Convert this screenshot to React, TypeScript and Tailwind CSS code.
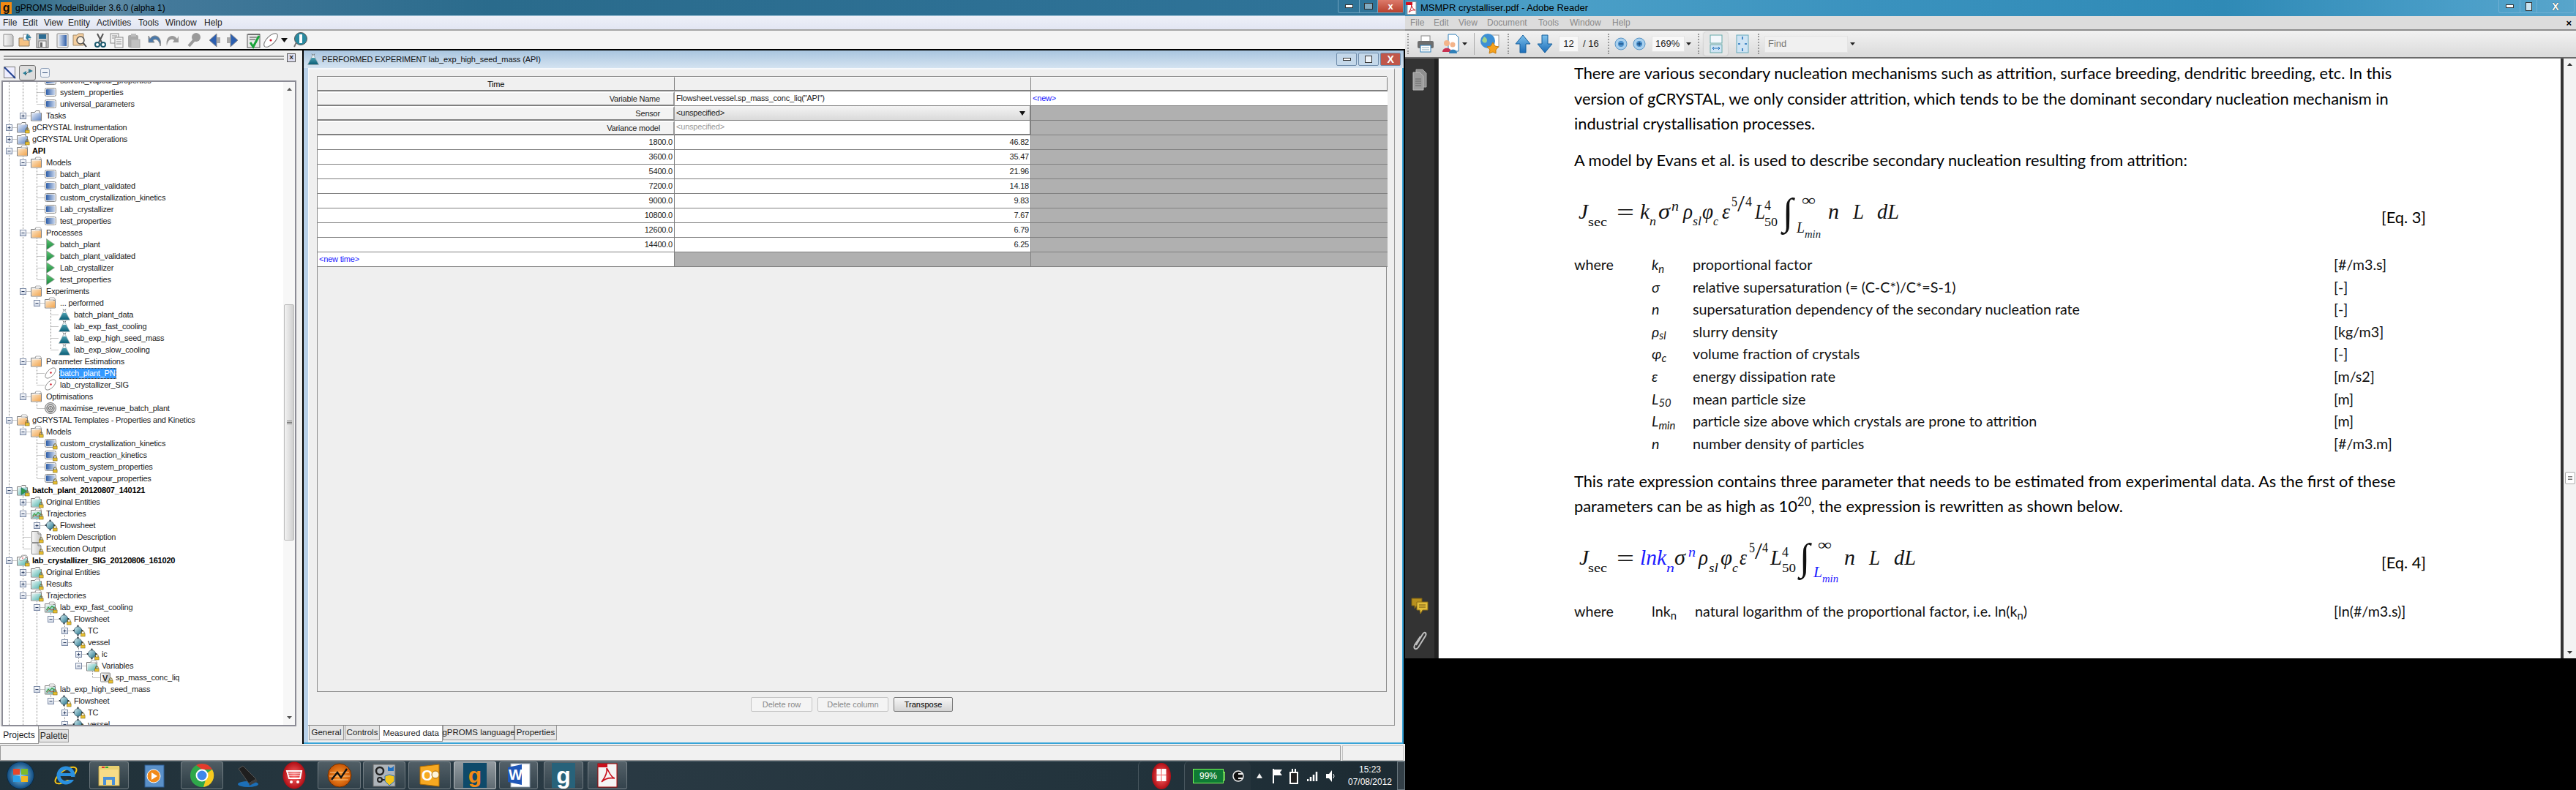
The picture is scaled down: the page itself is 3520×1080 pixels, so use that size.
import React from "react";

type Node = [number, "+" | "-" | "", string, string, ("b" | "l" | "bl")?];

const rows: Node[] = [
  [2, "", "model", "solvent_vapour_properties"],
  [2, "", "model", "system_properties"],
  [2, "", "model", "universal_parameters"],
  [1, "+", "folderC", "Tasks"],
  [0, "+", "folderC", "gCRYSTAL Instrumentation", "l"],
  [0, "+", "folderC", "gCRYSTAL Unit Operations", "l"],
  [0, "-", "folderO", "API", "b"],
  [1, "-", "folderO", "Models"],
  [2, "", "model", "batch_plant"],
  [2, "", "model", "batch_plant_validated"],
  [2, "", "model", "custom_crystallization_kinetics"],
  [2, "", "model", "Lab_crystallizer"],
  [2, "", "model", "test_properties"],
  [1, "-", "folderO", "Processes"],
  [2, "", "play", "batch_plant"],
  [2, "", "play", "batch_plant_validated"],
  [2, "", "play", "Lab_crystallizer"],
  [2, "", "play", "test_properties"],
  [1, "-", "folderO", "Experiments"],
  [2, "-", "folderO", "... performed"],
  [3, "", "flask", "batch_plant_data"],
  [3, "", "flask", "lab_exp_fast_cooling"],
  [3, "", "flask", "lab_exp_high_seed_mass"],
  [3, "", "flask", "lab_exp_slow_cooling"],
  [1, "-", "folderO", "Parameter Estimations"],
  [2, "", "pe", "batch_plant_PN"],
  [2, "", "pe", "lab_crystallizer_SIG"],
  [1, "-", "folderO", "Optimisations"],
  [2, "", "opt", "maximise_revenue_batch_plant"],
  [0, "-", "folderO", "gCRYSTAL Templates - Properties and Kinetics", "l"],
  [1, "-", "folderO", "Models", "l"],
  [2, "", "model", "custom_crystallization_kinetics", "l"],
  [2, "", "model", "custom_reaction_kinetics", "l"],
  [2, "", "model", "custom_system_properties", "l"],
  [2, "", "model", "solvent_vapour_properties", "l"],
  [0, "-", "runPlay", "batch_plant_20120807_140121", "bl"],
  [1, "+", "tealC", "Original Entities", "l"],
  [1, "-", "traj", "Trajectories", "l"],
  [2, "+", "fs", "Flowsheet", "l"],
  [1, "", "doc", "Problem Description", "l"],
  [1, "", "doc", "Execution Output", "l"],
  [0, "-", "runPe", "lab_crystallizer_SIG_20120806_161020", "bl"],
  [1, "+", "tealC", "Original Entities", "l"],
  [1, "+", "tealC", "Results", "l"],
  [1, "-", "tealO", "Trajectories", "l"],
  [2, "-", "traj", "lab_exp_fast_cooling", "l"],
  [3, "-", "fs", "Flowsheet", "l"],
  [4, "+", "fs", "TC", "l"],
  [4, "-", "fs", "vessel", "l"],
  [5, "+", "fs", "ic", "l"],
  [5, "-", "tealO", "Variables", "l"],
  [6, "", "var", "sp_mass_conc_liq", "l"],
  [2, "-", "traj", "lab_exp_high_seed_mass", "l"],
  [3, "-", "fs", "Flowsheet", "l"],
  [4, "+", "fs", "TC", "l"],
  [4, "-", "fs", "vessel", "l"],
];

const levels = rows.map((r) => r[0]).concat([2, 1, 0]);
const hasLater = (i: number, l: number) => {
  for (let j = i + 1; j < levels.length; j++) {
    if (levels[j] < l) return false;
    if (levels[j] === l) return true;
  }
  return false;
};

function Guides({ i, level, exp }: { i: number; level: number; exp: string }) {
  const w = 19 + 19 * level;
  const xOf = (l: number) => 8.5 + 19 * l;
  const els: React.ReactNode[] = [];
  for (let l = 0; l < level; l++) {
    if (hasLater(i, l))
      els.push(<line key={l} x1={xOf(l)} x2={xOf(l)} y1={0} y2={16} stroke="#8a8a8a" strokeDasharray="1 1" />);
  }
  const x = xOf(level);
  els.push(<line key="u" x1={x} x2={x} y1={0} y2={8} stroke="#8a8a8a" strokeDasharray="1 1" />);
  if (hasLater(i, level)) els.push(<line key="d" x1={x} x2={x} y1={8} y2={16} stroke="#8a8a8a" strokeDasharray="1 1" />);
  els.push(<line key="h" x1={x} x2={w} y1={8.5} y2={8.5} stroke="#8a8a8a" strokeDasharray="1 1" />);
  if (exp) {
    els.push(<rect key="b" x={x - 4} y={4.5} width={8} height={8} fill="url(#exp)" stroke="#7d8ba6" />);
    els.push(<line key="m" x1={x - 2} x2={x + 2} y1={8.5} y2={8.5} stroke="#2c3f63" />);
    if (exp === "+") els.push(<line key="p" x1={x} x2={x} y1={6.5} y2={10.5} stroke="#2c3f63" />);
  }
  return (
    <svg width={w} height={16} className="shrink-0">
      {els}
    </svg>
  );
}

const Lock = () => (
  <g>
    <path d="M12.5 12 v-1.5 a1.8 1.8 0 0 1 3.6 0 V12" fill="none" stroke="#6b5a10" strokeWidth="0.9" />
    <rect x="11.5" y="12" width="5.6" height="4" fill="#e9c030" stroke="#6b5a10" strokeWidth="0.5" />
  </g>
);

function Folder({ fill, open }: { fill: string; open?: boolean }) {
  return (
    <>
      <path d="M0.5 3.5 h5 l1.5 -2 h5 v3 h2.5 v10.5 h-14 z" fill="#f7f7f7" stroke="#7c7c7c" />
      {open && <path d="M6 4 l1 -3 h6 l2 3 z" fill="#fff" stroke="#8a8a8a" strokeWidth="0.7" />}
      <rect x="1.5" y={open ? 5.5 : 4.5} width="12.5" height={open ? 9 : 10} fill={`url(#${fill})`} />
    </>
  );
}

function Globe() {
  return (
    <>
      <path d="M7.5 1.5 L14 8 L7.5 14.5 L1 8 Z" fill="#3a5a70" />
      <circle cx="7.5" cy="8" r="5.2" fill="url(#globe)" stroke="#2b4453" strokeWidth="0.6" />
      <circle cx="7.5" cy="1.5" r="1.1" fill="#1d2b35" />
      <circle cx="7.5" cy="14.5" r="1.1" fill="#1d2b35" />
      <circle cx="1.5" cy="8" r="1.1" fill="#1d2b35" />
      <circle cx="13.5" cy="8" r="1.1" fill="#1d2b35" />
    </>
  );
}

function Ic({ t, lock }: { t: string; lock?: boolean }) {
  let c: React.ReactNode = null;
  if (t === "model")
    c = (
      <>
        <rect x="0.5" y="2.5" width="15" height="11" rx="2" fill="#eee" stroke="#8c8c8c" />
        <rect x="2" y="4" width="12" height="8" rx="1" fill="url(#model)" />
      </>
    );
  if (t === "folderO") c = <Folder fill="orangeF" open />;
  if (t === "folderC") c = <Folder fill="blueF" />;
  if (t === "tealC") c = <Folder fill="tealF" />;
  if (t === "tealO") c = <Folder fill="tealF" open />;
  if (t === "play")
    c = <path d="M2.5 0.5 L13.5 8 L2.5 15.5 Z" fill="url(#play)" stroke="#9a9a9a" strokeWidth="0.7" />;
  if (t === "flask")
    c = (
      <>
        <path d="M6 0.5 L8 4 L10 0.5" fill="none" stroke="#777" />
        <path d="M8 1 L15.5 15.5 H0.5 Z" fill="#e8f2f4" stroke="#7a8a90" strokeWidth="0.6" />
        <path d="M5.7 6 H10.3 L15 15 H1 Z" fill="url(#flask)" />
      </>
    );
  if (t === "pe")
    c = (
      <>
        <ellipse cx="8" cy="8" rx="9" ry="4.5" transform="rotate(-45 8 8)" fill="#fff" stroke="#777" strokeWidth="0.8" />
        <circle cx="8.5" cy="7.5" r="1.2" fill="#d11a2a" />
      </>
    );
  if (t === "opt")
    c = (
      <>
        <circle cx="8" cy="8" r="7.5" fill="#d8d8d8" stroke="#777" />
        <circle cx="8" cy="8" r="5" fill="none" stroke="#555" />
        <circle cx="8" cy="8" r="2.6" fill="none" stroke="#666" />
        <circle cx="8" cy="8" r="0.8" fill="#444" />
      </>
    );
  if (t === "doc")
    c = (
      <>
        <path d="M1.5 0.5 H10 L14 4 V15.5 H1.5 Z" fill="url(#docG)" stroke="#8d8d8d" />
        <path d="M10 0.5 V4 H14" fill="#ddd" stroke="#8d8d8d" />
      </>
    );
  if (t === "fs") c = <Globe />;
  if (t === "var")
    c = (
      <>
        <rect x="0.5" y="2" width="13" height="12" rx="1" fill="url(#docG)" stroke="#8c8c8c" />
        <text x="3" y="12.5" fontSize="11" fontWeight="700" fill="#222" fontFamily="Liberation Sans, sans-serif">
          V
        </text>
      </>
    );
  if (t === "traj")
    c = (
      <>
        <Folder fill="tealF" open />
        <path d="M2.5 12 L5 8 L7 10.5 L10 6.5 L13 9" fill="none" stroke="#3a9a3a" strokeWidth="1.2" />
        <path d="M2.5 13.5 L6 10.5 L9 12 L13 10.5" fill="none" stroke="#c83232" strokeWidth="0.8" />
      </>
    );
  if (t === "runPlay")
    c = (
      <>
        <Folder fill="tealF" />
        <path d="M6 4.5 L13.5 9.5 L6 14.5 Z" fill="#2f9a4a" stroke="#1e5c70" strokeWidth="0.6" />
      </>
    );
  if (t === "runPe")
    c = (
      <>
        <Folder fill="tealF" open />
        <ellipse cx="8" cy="5" rx="5" ry="2.4" transform="rotate(-30 8 5)" fill="#fff" stroke="#777" strokeWidth="0.6" />
        <circle cx="8" cy="5" r="0.8" fill="#d11a2a" />
      </>
    );
  return (
    <svg width={17} height={16} viewBox="0 0 17 16" className="shrink-0 overflow-visible">
      {c}
      {lock && <Lock />}
    </svg>
  );
}

function Tree() {
  return (
    <div className="-mt-[10px]">
      {rows.map((r, i) => {
        const [lv, exp, ic, label, f] = r;
        const bold = f === "b" || f === "bl";
        const lock = f === "l" || f === "bl";
        const sel = label === "batch_plant_PN";
        return (
          <div key={i} className="flex h-4 items-center whitespace-nowrap">
            <Guides i={i} level={lv} exp={exp} />
            <Ic t={ic} lock={lock} />
            {sel ? (
              <span className="ml-[3px] flex h-[15px] items-center border border-dotted border-[#5a3a10] bg-[#3399ff] pr-[1px] leading-none text-white">
                {label}
              </span>
            ) : (
              <span className={`ml-[4px] ${bold ? "font-bold text-black" : ""}`}>{label}</span>
            )}
          </div>
        );
      })}
    </div>
  );
}

/* ---------- toolbar drawings ---------- */
const T = ({ children, w = 24, h = 24 }: { children: React.ReactNode; w?: number; h?: number }) => (
  <svg width={w} height={h} viewBox={`0 0 ${w} ${h}`} className="shrink-0">
    {children}
  </svg>
);

const tb: Record<string, React.ReactNode> = {
  newDoc: <path d="M5 4 H16 L18 6 V20 H5 Z" fill="url(#docG)" stroke="#8a8a8a" />,
  open: (
    <>
      <path d="M3 9 H8 L10 7 H17 V20 H3 Z" fill="#f5c283" stroke="#8a7a60" />
      <path d="M9 4 H16 L18 6 V12 H9 Z" fill="#fff" stroke="#999" />
      <path d="M14 3 L20 9 L16 9 L16 13 L12 9 Z" fill="#2f7fa0" />
    </>
  ),
  save: (
    <>
      <rect x="4" y="3" width="16" height="19" fill="#c9c9c9" stroke="#666" />
      <rect x="7" y="4" width="10" height="6" fill="#2b6c93" />
      <rect x="7" y="13" width="10" height="9" fill="#f4f4f4" stroke="#777" />
      <rect x="9" y="15" width="3" height="6" fill="#666" />
    </>
  ),
  model: (
    <>
      <rect x="4" y="3" width="15" height="19" rx="1" fill="#eee" stroke="#8b8b8b" />
      <rect x="6" y="5" width="11" height="15" fill="url(#model2)" />
    </>
  ),
  search: (
    <>
      <path d="M3 5 H8 L10 3 H17 V19 H3 Z" fill="#f5cf9f" stroke="#a08a6a" />
      <circle cx="13" cy="12" r="5" fill="#fff" fillOpacity=".7" stroke="#555" strokeWidth="1.5" />
      <path d="M17 16 L21 21" stroke="#444" strokeWidth="2" />
    </>
  ),
  cut: (
    <>
      <path d="M8 3 L14 15 M16 3 L10 15" stroke="#555" strokeWidth="2" />
      <circle cx="8" cy="18" r="3" fill="#fff" stroke="#1d5a6e" strokeWidth="2" />
      <circle cx="16" cy="18" r="3" fill="#fff" stroke="#1d5a6e" strokeWidth="2" />
    </>
  ),
  copy: (
    <>
      <rect x="3" y="3" width="11" height="13" fill="#f5f5f5" stroke="#888" />
      <rect x="9" y="8" width="11" height="14" fill="#f5f5f5" stroke="#888" />
      <path d="M11 11 H18 M11 14 H18 M11 17 H18" stroke="#888" />
      <path d="M5 6 H12 M5 9 H8" stroke="#888" />
    </>
  ),
  paste: (
    <>
      <rect x="4" y="5" width="14" height="17" rx="2" fill="#a8a8a8" />
      <rect x="8" y="3" width="7" height="4" fill="#bcbcbc" />
      <rect x="8" y="11" width="12" height="11" fill="#c2c2c2" stroke="#aaa" />
    </>
  ),
  undo: <path d="M5 10 C10 2 22 6 19 20 C18 12 13 9 9 12 L11 15 L3 15 L3 6 Z" fill="#4a78a8" stroke="#8d8d8d" />,
  redo: <path d="M19 10 C14 2 2 6 5 20 C6 12 11 9 15 12 L13 15 L21 15 L21 6 Z" fill="#9a9a9a" />,
  find: (
    <>
      <circle cx="15" cy="8" r="6" fill="#9a9a9a" />
      <path d="M12 12 L5 20" stroke="#9a9a9a" strokeWidth="4" />
    </>
  ),
  left: (
    <>
      <path d="M4 12 L14 3 V21 Z" fill="#2c5fb0" stroke="#8d8d8d" />
      <rect x="14" y="8" width="5" height="8" fill="#a8a8a8" />
    </>
  ),
  right: (
    <>
      <path d="M20 12 L10 3 V21 Z" fill="#2c5fb0" stroke="#8d8d8d" />
      <rect x="5" y="8" width="5" height="8" fill="#a8a8a8" />
    </>
  ),
  check: (
    <>
      <rect x="3" y="4" width="17" height="18" fill="#e8e8e8" stroke="#555" />
      <path d="M4 4 H20 M6 8 H17 M6 11 H14" stroke="#444" />
      <path d="M7 15 L11 21 L19 6" fill="none" stroke="#1aa33a" strokeWidth="3" />
    </>
  ),
  pe: (
    <>
      <ellipse cx="12" cy="12" rx="12" ry="5.5" transform="rotate(-45 12 12)" fill="#fff" stroke="#777" />
      <circle cx="12" cy="12" r="1.6" fill="#d11a2a" />
    </>
  ),
  info: (
    <>
      <circle cx="13" cy="10" r="8.5" fill="#2a8aa0" stroke="#555" />
      <rect x="11" y="4" width="4" height="12" fill="#fff" />
      <path d="M7 15 L4 21" stroke="#777" strokeWidth="2" />
    </>
  ),
};

const leftTools: [string, number][] = [
  ["newDoc", 0], ["open", 0], ["save", 5], ["model", 0], ["search", 5], ["cut", 0], ["copy", 0], ["paste", 6],
  ["undo", 0], ["redo", 7], ["find", 6], ["left", 0], ["right", 7], ["check", 0], ["pe", 0],
];

function Tb({ n, after }: { n: string; after: number }) {
  return (
    <div className="flex h-full w-[23px] shrink-0 items-center justify-center" style={after ? { marginRight: after } : undefined}>
      <T>{tb[n]}</T>
    </div>
  );
}

const Defs = () => (
  <svg className="absolute h-0 w-0">
    <defs>
      <linearGradient id="exp" x1="0" y1="0" x2="0" y2="1"><stop offset="0" stopColor="#fff" /><stop offset="1" stopColor="#cdd5e4" /></linearGradient>
      <linearGradient id="model" x1="0" y1="0" x2="1" y2="0"><stop offset="0" stopColor="#2e5ea8" /><stop offset="1" stopColor="#c9d6ec" /></linearGradient>
      <linearGradient id="model2" x1="0" y1="0" x2="1" y2="0"><stop offset="0" stopColor="#dfe6f2" /><stop offset="1" stopColor="#2e5ea8" /></linearGradient>
      <linearGradient id="orangeF" x1="0" y1="0" x2="1" y2="1"><stop offset="0" stopColor="#fbe3c4" /><stop offset="1" stopColor="#f2a54e" /></linearGradient>
      <linearGradient id="blueF" x1="0" y1="0" x2="1" y2="1"><stop offset="0" stopColor="#e6ecf7" /><stop offset="1" stopColor="#5d84c4" /></linearGradient>
      <linearGradient id="tealF" x1="0" y1="0" x2="1" y2="1"><stop offset="0" stopColor="#e8f5f4" /><stop offset="1" stopColor="#4fb4ae" /></linearGradient>
      <linearGradient id="play" x1="0" y1="0" x2="0" y2="1"><stop offset="0" stopColor="#63c978" /><stop offset="1" stopColor="#16853a" /></linearGradient>
      <linearGradient id="flask" x1="0" y1="0" x2="0" y2="1"><stop offset="0" stopColor="#4c9fb0" /><stop offset="1" stopColor="#0b5f78" /></linearGradient>
      <linearGradient id="globe" x1="0" y1="0" x2="1" y2="1"><stop offset="0" stopColor="#d4eef2" /><stop offset="1" stopColor="#22718a" /></linearGradient>
      <linearGradient id="docG" x1="0" y1="0" x2="1" y2="0"><stop offset="0" stopColor="#fafafa" /><stop offset="1" stopColor="#c4c4c4" /></linearGradient>
      <linearGradient id="arrowB" x1="0" y1="0" x2="0" y2="1"><stop offset="0" stopColor="#7cc0ec" /><stop offset="1" stopColor="#1b6cb8" /></linearGradient>
      <radialGradient id="orb"><stop offset="0" stopColor="#8fd0f0" /><stop offset="1" stopColor="#0f4a80" /></radialGradient>
      <radialGradient id="redB"><stop offset="0" stopColor="#ff6a6a" /><stop offset="1" stopColor="#b00d14" /></radialGradient>
      <radialGradient id="orangeB"><stop offset="0" stopColor="#ff9a2e" /><stop offset="1" stopColor="#c85505" /></radialGradient>
    </defs>
  </svg>
);

/* ---------- table ---------- */
const headBase = "h-5 bg-[#f0f0f0] border-b-2 border-r border-[#808080] border-t border-t-white text-center leading-[18px] text-black";
const labelCell = "h-5 bg-[#f3f3f3] border-t-2 border-t-white border-b-2 border-b-[#808080] border-r-2 border-r-[#9a9a9a] pr-[18px] text-right leading-[16px]";
const dataRows = [
  ["1800.0", "46.82"], ["3600.0", "35.47"], ["5400.0", "21.96"], ["7200.0", "14.18"],
  ["9000.0", "9.83"], ["10800.0", "7.67"], ["12600.0", "6.79"], ["14400.0", "6.25"],
];
const numCell = "h-5 bg-white border-b border-r border-[#808080] pr-[2px] text-right leading-[19px]";
const greyCell = "h-5 bg-[#b0b0b0] border-b border-[#808080]";

function Table() {
  return (
    <div className="grid grid-cols-[488px_487px_487px]">
      <div className={headBase}>Time</div>
      <div className={headBase} />
      <div className={headBase} />

      <div className={labelCell}>Variable Name</div>
      <div className="h-5 truncate border-b border-r border-[#808080] bg-white pl-[2px] leading-[19px]">Flowsheet.vessel.sp_mass_conc_liq("API")</div>
      <div className="h-5 border-b border-[#808080] bg-white pl-[2px] leading-[19px] text-[#1a1aff]">&lt;new&gt;</div>

      <div className={labelCell}>Sensor</div>
      <div className="flex h-5 items-center justify-between border-b border-r-2 border-[#808080] bg-[linear-gradient(180deg,#f4f4f4,#dadada)] pl-[2px] pr-[6px]">
        <span>&lt;unspecified&gt;</span>
        <svg width="8" height="6"><path d="M0 0 H8 L4 6 Z" fill="#111" /></svg>
      </div>
      <div className={greyCell} />

      <div className={labelCell}>Variance model</div>
      <div className="h-5 border-b-2 border-r-2 border-[#808080] bg-white pl-[2px] leading-[17px] text-[#999]">&lt;unspecified&gt;</div>
      <div className={greyCell} />

      {dataRows.map(([a, b]) => (
        <React.Fragment key={a}>
          <div className={numCell}>{a}</div>
          <div className={numCell}>{b}</div>
          <div className={greyCell} />
        </React.Fragment>
      ))}

      <div className="h-5 border-b border-r border-[#808080] bg-white pl-[2px] leading-[19px] text-[#1a1aff]">&lt;new time&gt;</div>
      <div className="h-5 border-b border-r border-[#808080] bg-[#b0b0b0]" />
      <div className={greyCell} />
    </div>
  );
}

/* ---------- window buttons ---------- */
const WinBtn = ({ children, cls }: { children: React.ReactNode; cls: string }) => (
  <div className={`flex h-[18px] w-[28px] items-center justify-center rounded-[2px] border border-[#6f8cab] ${cls}`}>{children}</div>
);

/* ---------- taskbar ---------- */
const task: { w: string; btn?: string; n: React.ReactNode }[] = [
  {
    w: "w-[56px] ml-0",
    n: (
      <T w={40} h={40}>
        <circle cx="20" cy="20" r="18.5" fill="url(#orb)" stroke="#0b2c44" />
        <rect x="10" y="11" width="9" height="8" fill="#e8472a" />
        <rect x="21" y="11" width="9" height="8" fill="#7cbb2a" />
        <rect x="10" y="21" width="9" height="8" fill="#2a9fe8" />
        <rect x="21" y="21" width="9" height="8" fill="#f5b81e" />
      </T>
    ),
  },
  {
    w: "w-[62px] ml-[3px]",
    n: (
      <T w={36} h={36}>
        <ellipse cx="18" cy="18" rx="17" ry="7" transform="rotate(-35 18 18)" fill="none" stroke="#f5c518" strokeWidth="2" />
        <circle cx="18" cy="18" r="10" fill="none" stroke="#2a90e0" strokeWidth="5" />
        <rect x="8" y="15" width="20" height="4" fill="#2a90e0" />
        <rect x="20" y="20" width="10" height="4" fill="#1d2b35" />
      </T>
    ),
  },
  {
    w: "w-[54px] ml-[1px]",
    btn: "b",
    n: (
      <T w={34} h={34}>
        <rect x="3" y="6" width="28" height="25" fill="#f7dc88" stroke="#b89c40" />
        <rect x="3" y="4" width="28" height="5" fill="#e8d070" />
        <rect x="7" y="5" width="4" height="2" fill="#d33" />
        <rect x="12" y="5" width="4" height="2" fill="#3a3" />
        <path d="M9 30 V19 H25 V30 H21 V23 H13 V30 Z" fill="#4a90d8" />
      </T>
    ),
  },
  {
    w: "w-[70px] ml-[1px]",
    n: (
      <T w={30} h={34}>
        <rect x="1" y="3" width="26" height="30" fill="#5a90c8" stroke="#2b5a90" />
        <circle cx="13" cy="18" r="9" fill="#f18a1a" stroke="#fff" />
        <path d="M10 13 L18 18 L10 23 Z" fill="#fff" />
      </T>
    ),
  },
  {
    w: "w-[58px]",
    btn: "b",
    n: (
      <T w={34} h={34}>
        <circle cx="17" cy="17" r="16" fill="#2fa84a" />
        <path d="M17 1 A16 16 0 0 1 31 9 L17 9 L9 3 A16 16 0 0 1 17 1 Z" fill="#e33a2c" />
        <path d="M31 9 A16 16 0 0 1 19 33 L25 13 Z" fill="#f7c91e" />
        <circle cx="17" cy="17" r="7.5" fill="#3f86e8" stroke="#fff" strokeWidth="2" />
      </T>
    ),
  },
  {
    w: "w-[65px] ml-[1px]",
    n: (
      <T w={34} h={34}>
        <ellipse cx="17" cy="29" rx="14" ry="4" fill="#1c6fb8" />
        <path d="M4 8 L10 4 L28 22 L18 28 Z" fill="#1f1f1f" stroke="#555" />
        <path d="M18 28 L28 22 L30 25 L19 31 Z" fill="#3d3d3d" />
      </T>
    ),
  },
  {
    w: "w-[62px]",
    n: (
      <T w={34} h={38}>
        <ellipse cx="17" cy="19" rx="15.5" ry="18.5" fill="url(#redB)" />
        <path d="M7 13 H27 L25 23 H10 Z" fill="none" stroke="#fff" strokeWidth="2" />
        <path d="M9 16 H26 M10 19 H25" stroke="#fff" />
        <circle cx="13" cy="28" r="2" fill="#fff" />
        <circle cx="22" cy="28" r="2" fill="#fff" />
      </T>
    ),
  },
  {
    w: "w-[59px] ml-[1px]",
    btn: "b",
    n: (
      <T w={34} h={36}>
        <circle cx="17" cy="18" r="16" fill="url(#orangeB)" stroke="#6b2f00" />
        <path d="M4 14 H30 M3 19 H31 M5 24 H29" stroke="#ffd9a8" strokeWidth="0.8" />
        <path d="M6 24 L14 14 L19 21 L27 9" fill="none" stroke="#111" strokeWidth="2.4" />
      </T>
    ),
  },
  {
    w: "w-[58px] ml-[3px]",
    btn: "b",
    n: (
      <T w={34} h={36}>
        <rect x="2" y="3" width="30" height="30" fill="#aeb4b9" stroke="#666" />
        <circle cx="11" cy="12" r="5" fill="none" stroke="#222" strokeWidth="2.5" />
        <circle cx="11" cy="24" r="3" fill="none" stroke="#222" strokeWidth="2" />
        <path d="M14 24 H22" stroke="#222" strokeWidth="2" />
        <path d="M22 5 q4 6 8 0 v7 h-8 z" fill="#1f6fc0" />
        <path d="M24 17 L31 19 V26 L24 32 L18 26 V19 Z" fill="#f5c518" stroke="#2a6fb8" />
      </T>
    ),
  },
  {
    w: "w-[58px] ml-[4px]",
    btn: "b",
    n: (
      <T w={34} h={36}>
        <path d="M4 6 L30 3 V33 L4 30 Z" fill="#f6a821" stroke="#b06a00" />
        <text x="6" y="25" fontSize="20" fontWeight="700" fill="#fff" fontFamily="Liberation Sans, sans-serif">O</text>
        <circle cx="25" cy="17" r="5" fill="#fff6da" stroke="#b06a00" />
      </T>
    ),
  },
  {
    w: "w-[58px] ml-[4px]",
    btn: "a",
    n: (
      <div className="flex h-[34px] w-[32px] items-center justify-center bg-[#0e4a6a] font-['Liberation_Sans',sans-serif] text-[30px] font-bold leading-none text-[#f28a16]">g</div>
    ),
  },
  {
    w: "w-[53px] ml-[4px]",
    btn: "b",
    n: (
      <T w={34} h={36}>
        <rect x="6" y="2" width="26" height="32" fill="#fff" stroke="#9ab" />
        <path d="M2 7 L21 3 V31 L2 27 Z" fill="#1f57b8" />
        <text x="3" y="24" fontSize="20" fontWeight="700" fill="#fff" fontFamily="Liberation Sans, sans-serif">W</text>
      </T>
    ),
  },
  {
    w: "w-[54px] ml-[8px]",
    btn: "b",
    n: (
      <div className="flex h-[34px] w-[32px] items-center justify-center bg-[#27627a] font-['Liberation_Sans',sans-serif] text-[32px] font-bold leading-none text-white">g</div>
    ),
  },
  {
    w: "w-[54px] ml-[6px]",
    btn: "b",
    n: (
      <T w={32} h={36}>
        <rect x="3" y="2" width="26" height="32" fill="#f4f4f4" stroke="#a00" />
        <rect x="3" y="2" width="13" height="5" fill="#c8101c" />
        <path d="M8 27 C14 20 16 12 15 8 C19 14 20 20 26 22 C20 21 13 22 8 27 Z" fill="none" stroke="#c8101c" strokeWidth="1.6" />
      </T>
    ),
  },
];

function Taskbar() {
  return (
    <div className="flex h-10 border-t border-[#5e6d75] bg-[linear-gradient(90deg,#1f3038,#2a3a44_40%,#22333c_80%,#1c2a32)] tracking-normal">
      <div className="flex">
        {task.map((it, i) => (
          <div
            key={i}
            className={`flex h-[38px] shrink-0 items-center justify-center rounded-[3px] ${it.w} ${
              it.btn === "b"
                ? "border border-white/25 bg-[linear-gradient(180deg,rgba(255,255,255,.2),rgba(255,255,255,.05))]"
                : it.btn === "a"
                ? "border border-white/50 bg-[linear-gradient(180deg,rgba(255,255,255,.5),rgba(255,255,255,.25))]"
                : ""
            }`}
          >
            {it.n}
          </div>
        ))}
      </div>
      <div className="ml-auto flex h-full items-center text-white">
        <div className="flex h-full w-[63px] items-center justify-center rounded-t-[6px] border-l border-[#4a5860]">
          <T w={28} h={38}>
            <ellipse cx="14" cy="19" rx="13" ry="18" fill="url(#redB)" />
            <rect x="7.5" y="9" width="6" height="8" fill="#fff" />
            <rect x="14.5" y="9" width="6" height="8" fill="#fff" />
            <rect x="7.5" y="18" width="6" height="8" fill="#fff" />
            <rect x="14.5" y="18" width="6" height="8" fill="#fff" />
          </T>
        </div>
        <div className="flex h-full w-[91px] items-center rounded-t-[6px] border-l border-[#4a5860] bg-[#26343c] pl-[11px]">
          <div className="flex h-[20px] w-[42px] items-center justify-center border border-[#7dff5a] bg-[#0f7a34] text-[12px] leading-none">99%</div>
          <div className="h-[12px] w-[2px] border-y border-r border-[#7dff5a]" />
          <svg width="18" height="18" className="ml-[9px]">
            <circle cx="9" cy="9" r="7" fill="#111" stroke="#eee" strokeWidth="1.5" />
            <rect x="9" y="5" width="7" height="2" fill="#eee" />
            <rect x="9" y="11" width="7" height="2" fill="#eee" />
          </svg>
        </div>
        <svg width="8" height="7" className="ml-[8px]"><path d="M0 7 L4 0 L8 7 Z" fill="#eee" /></svg>
        <svg width="16" height="22" className="ml-[13px]"><path d="M2 1 V21" stroke="#fff" strokeWidth="2" /><path d="M3 2 H14 L11 6 L14 10 H3 Z" fill="#fff" /></svg>
        <svg width="14" height="22" className="ml-[7px]"><rect x="2" y="6" width="10" height="15" fill="#222" stroke="#fff" strokeWidth="2" /><path d="M5 1 V6 M9 1 V6" stroke="#fff" strokeWidth="2" /></svg>
        <svg width="16" height="16" className="ml-[11px]"><path d="M1 15 V12 M5 15 V9 M9 15 V6 M13 15 V2" stroke="#fff" strokeWidth="2.5" /></svg>
        <svg width="14" height="20" className="ml-[9px]"><path d="M1 7 H5 L9 2 V18 L5 13 H1 Z" fill="#fff" /><path d="M11 7 Q13 10 11 13" fill="none" stroke="#fff" /></svg>
        <div className="ml-[12px] flex w-[70px] flex-col items-center text-[12px] leading-[17px]">
          <span>15:23</span>
          <span>07/08/2012</span>
        </div>
        <div className="ml-[2px] h-full w-[11px] border border-[#6a777e] bg-white/10" />
      </div>
    </div>
  );
}

/* ---------- PDF ---------- */
const Grip = ({ cls }: { cls: string }) => <div className={`h-[28px] w-[3px] shrink-0 border-l-2 border-dotted border-[#9a9a9a] ${cls}`} />;
const Drop = ({ cls = "w-[10px]" }: { cls?: string }) => (
  <div className={`flex shrink-0 justify-center ${cls}`}>
    <svg width="7" height="4"><path d="M0 0 H7 L3.5 4 Z" fill="#222" /></svg>
  </div>
);

const Ln = ({ children, cls = "" }: { children: React.ReactNode; cls?: string }) => (
  <div className={`h-[34.5px] whitespace-nowrap text-[21.8px] leading-[34.5px] text-black ${cls}`}>{children}</div>
);

const W = ({ children, cls = "" }: { children: React.ReactNode; cls?: string }) => (
  <div className={`h-[30.6px] whitespace-nowrap text-[19.7px] leading-[30.6px] text-[#111] ${cls}`}>{children}</div>
);

const whereRows: [React.ReactNode, string, string][] = [
  [<>k<sub>n</sub></>, "proportional factor", "[#/m3.s]"],
  ["σ", "relative supersaturation (= (C-C*)/C*=S-1)", "[-]"],
  ["n", "supersaturation dependency of the secondary nucleation rate", "[-]"],
  [<>ρ<sub>sl</sub></>, "slurry density", "[kg/m3]"],
  [<>φ<sub>c</sub></>, "volume fraction of crystals", "[-]"],
  ["ε", "energy dissipation rate", "[m/s2]"],
  [<>L<sub>50</sub></>, "mean particle size", "[m]"],
  [<>L<sub>min</sub></>, "particle size above which crystals are prone to attrition", "[m]"],
  ["n", "number density of particles", "[#/m3.m]"],
];

type FT = [number, number, string, number, number?, boolean?, boolean?];
function Formula({ items, vb, w, h }: { items: FT[]; vb: string; w: number; h: number }) {
  return (
    <svg width={w} height={h} viewBox={vb} className="shrink-0 overflow-visible">
      {items.map(([x, y, s, size, len, upright, blue], i) => (
        <text
          key={i}
          x={x}
          y={y}
          fontSize={size}
          fontFamily="'Liberation Serif', serif"
          fontStyle={upright ? "normal" : "italic"}
          fill={blue ? "#1a1aff" : "#111"}
          {...(len ? { textLength: len, lengthAdjust: "spacingAndGlyphs" as const } : {})}
        >
          {s}
        </text>
      ))}
    </svg>
  );
}

const f1: FT[] = [
  [2157, 299, "J", 29, 13], [2170, 309, "sec", 17, 26, true], [2209, 301, "=", 32, 24, true],
  [2241, 299, "k", 29, 13], [2254, 308, "n", 17, 9], [2266, 299, "σ", 29, 16], [2284, 288, "n", 18, 10],
  [2300, 299, "ρ", 29, 13], [2313, 308, "sl", 17, 12], [2326, 299, "φ", 29, 15], [2341, 308, "c", 17, 7],
  [2353, 299, "ε", 29, 11], [2366, 282, "5", 18, 8, true], [2374, 289, "/", 32, 10, true], [2385, 282, "4", 18, 9, true],
  [2398, 299, "L", 29, 14], [2411, 287, "4", 18, 9, true], [2411, 309, "50", 17, 18, true],
  [2436, 307, "∫", 52, undefined, true], [2462, 281, "∞", 22, 19, true], [2455, 318, "L", 22, 11], [2466, 325, "min", 15, 22],
  [2498, 299, "n", 29, 15], [2532, 299, "L", 29, 15], [2565, 299, "dL", 29, 30],
];
const f2: FT[] = [
  [2158, 772, "J", 29, 13], [2170, 782, "sec", 17, 26, true], [2209, 774, "=", 32, 24, true],
  [2241, 772, "lnk", 29, 36, false, true], [2277, 782, "n", 17, 11, false, true], [2288, 772, "σ", 29, 15],
  [2307, 761, "n", 18, 10, false, true], [2321, 772, "ρ", 29, 13], [2335, 782, "sl", 17, 13], [2351, 772, "φ", 29, 16], [2367, 782, "c", 17, 8],
  [2377, 772, "ε", 29, 10], [2390, 755, "5", 18, 8, true], [2398, 764, "/", 32, 10, true], [2408, 755, "4", 18, 8, true],
  [2419, 772, "L", 29, 16], [2435, 761, "4", 18, 9, true], [2435, 782, "50", 17, 19, true],
  [2459, 779, "∫", 52, undefined, true], [2484, 752, "∞", 22, 19, true], [2478, 789, "L", 22, 12, false, true], [2490, 796, "min", 15, 22, false, true],
  [2520, 772, "n", 29, 15], [2554, 772, "L", 29, 15], [2588, 772, "dL", 29, 30],
];

function PdfTool({ children, cls }: { children: React.ReactNode; cls: string }) {
  return <div className={`flex shrink-0 items-center justify-center ${cls}`}>{children}</div>;
}

function Pdf() {
  return (
    <div className="flex h-[900px] w-[1600px] shrink-0 flex-col font-['Lato',sans-serif] tracking-normal">
      <div className="flex h-[22px] shrink-0 items-center bg-[linear-gradient(90deg,#3f8fba,#4ca0c8_12%,#3a92be_40%,#2f8ab6_70%,#4a9ec8_90%,#58a5cb)]">
        <svg width="16" height="18" className="ml-[1px]">
          <rect x="2" y="0.5" width="12" height="17" fill="#fff" stroke="#999" />
          <rect x="0" y="1" width="9" height="4" fill="#d01020" />
          <path d="M4 15 C7 11 8 7 7.5 5 C9 8 10 11 13 12 C10 11.5 7 12 4 15 Z" fill="none" stroke="#c8101c" />
        </svg>
        <span className="ml-[4px] font-['Liberation_Sans',sans-serif] text-[13px] text-black">MSMPR crystalliser.pdf - Adobe Reader</span>
        <div className="ml-auto mr-[2px] flex h-[18px] w-[104px] self-start rounded-b-[3px] border-x border-b border-[#70b0d4]">
          <div className="flex w-[28px] items-center justify-center"><div className="h-[5px] w-[11px] border border-[#333] bg-white" /></div>
          <div className="flex w-[24px] items-center justify-center border-x border-[#70b0d4]"><div className="h-[12px] w-[9px] border border-[#333] bg-white/70" /></div>
          <div className="flex flex-1 items-center justify-center font-['Liberation_Sans',sans-serif] text-[14px] font-bold leading-none text-white [text-shadow:0_0_1px_#000]">X</div>
        </div>
      </div>
      <div className="flex h-5 shrink-0 items-center border-b-2 border-[#8c8c8c] bg-[#dcdcdc] font-['Liberation_Sans',sans-serif] text-[12px] text-[#8a8a8a]">
        {[["File", "w-[32px] ml-[7px]"], ["Edit", "w-[34px]"], ["View", "w-[39px]"], ["Document", "w-[70px]"], ["Tools", "w-[43px]"], ["Window", "w-[58px]"], ["Help", "w-[40px]"]].map(([t, c]) => (
          <span key={t} className={c}>{t}</span>
        ))}
        <span className="ml-auto mr-[6px] text-[13px] font-bold leading-none text-black">×</span>
      </div>
      <div className="flex h-[38px] shrink-0 items-center border-b-2 border-[#6a6a6a] bg-[linear-gradient(180deg,#f2f2f2,#dadada)] font-['Liberation_Sans',sans-serif] text-[13px] text-[#222]">
        <Grip cls="ml-[3px]" />
        <PdfTool cls="ml-[8px] w-[28px]">
          <T w={24} h={24}>
            <rect x="6" y="1" width="12" height="8" fill="#fff" stroke="#888" />
            <rect x="1" y="8" width="22" height="10" rx="2" fill="#6e6e6e" />
            <rect x="5" y="14" width="14" height="9" fill="#fff" stroke="#2f7fb8" />
            <path d="M7 17 H17 M7 20 H17" stroke="#8ab" />
          </T>
        </PdfTool>
        <PdfTool cls="ml-[6px] w-[28px]">
          <T w={24} h={28}>
            <path d="M9 1 H19 L23 5 V24 H9 Z" fill="#fff" stroke="#2f7fb8" />
            <circle cx="7" cy="13" r="4" fill="#f3b48a" />
            <path d="M1 25 C1 18 13 18 13 25 Z" fill="#c83050" />
            <circle cx="15" cy="15" r="3.5" fill="#f3b48a" />
            <path d="M10 27 C10 20 21 20 21 27 Z" fill="#2f7fb8" />
          </T>
        </PdfTool>
        <Drop />
        <div className="ml-[8px] h-[30px] w-px shrink-0 bg-[#aaa]" />
        <PdfTool cls="ml-[7px] w-[28px]">
          <T w={28} h={30}>
            <rect x="12" y="3" width="14" height="16" fill="#fff" stroke="#999" />
            <circle cx="11" cy="11" r="10" fill="#3d8fd4" />
            <path d="M6 5 Q12 8 9 13 Q5 15 3 10 Z" fill="#9fd28a" />
            <path d="M18 13 L21 18 L26 19 L22 23 L22 28 L18 26 L13 28 L14 23 L10 19 L15 18 Z" fill="#f5a21e" stroke="#c87a0a" />
          </T>
        </PdfTool>
        <Grip cls="ml-[10px]" />
        <PdfTool cls="ml-[5px] w-[26px]">
          <T w={22} h={26}><path d="M11 1 L21 13 H15 V25 H7 V13 H1 Z" fill="url(#arrowB)" stroke="#145f9c" /></T>
        </PdfTool>
        <PdfTool cls="ml-[4px] w-[26px]">
          <T w={22} h={26}><path d="M11 25 L21 13 H15 V1 H7 V13 H1 Z" fill="url(#arrowB)" stroke="#145f9c" /></T>
        </PdfTool>
        <div className="ml-[6px] flex h-[22px] w-[27px] shrink-0 items-center justify-center border border-[#e4e4e4] bg-[#f8f8f8]">12</div>
        <span className="ml-[6px] w-[26px] shrink-0">/ 16</span>
        <Grip cls="ml-[8px]" />
        <PdfTool cls="ml-[5px] w-[20px]">
          <T w={18} h={18}><circle cx="9" cy="9" r="8" fill="#a9d0ee" stroke="#5a95c5" /><circle cx="9" cy="9" r="4" fill="#4a90cc" /><path d="M6 9 H12" stroke="#0c3a6a" /></T>
        </PdfTool>
        <PdfTool cls="ml-[5px] w-[20px]">
          <T w={18} h={18}><circle cx="9" cy="9" r="8" fill="#a9d0ee" stroke="#5a95c5" /><circle cx="9" cy="9" r="4" fill="#4a90cc" /><path d="M6 9 H12 M9 6 V12" stroke="#0c3a6a" /></T>
        </PdfTool>
        <div className="ml-[7px] flex h-[22px] w-[45px] shrink-0 items-center border border-[#e4e4e4] bg-[#f8f8f8] pl-[4px]">169%</div>
        <Drop />
        <Grip cls="ml-[8px]" />
        <PdfTool cls="ml-[5px] h-[32px] w-[33px] rounded-[3px] bg-[#e6e6e6] shadow-[0_0_2px_#aaa]">
          <T w={18} h={26}>
            <rect x="1" y="1" width="16" height="11" fill="#f4f8fc" stroke="#6aa" />
            <rect x="1" y="14" width="16" height="11" fill="#cfe4f4" stroke="#6aa" />
            <path d="M4 19 H14 M4 19 L6 17 M4 19 L6 21 M14 19 L12 17 M14 19 L12 21" stroke="#1b6cb8" />
          </T>
        </PdfTool>
        <PdfTool cls="ml-[6px] w-[28px]">
          <T w={18} h={26}>
            <rect x="1" y="1" width="16" height="24" fill="#cfe4f4" stroke="#6ab" />
            <path d="M9 3 V7 M9 19 V23 M3 13 H6 M12 13 H15" stroke="#1b6cb8" strokeWidth="1.5" />
          </T>
        </PdfTool>
        <Grip cls="ml-[7px]" />
        <div className="ml-[6px] flex h-[23px] w-[114px] shrink-0 items-center border border-[#e4e4e4] bg-[#f0f0f0] pl-[4px] text-[#777]">Find</div>
        <Drop cls="w-[12px]" />
      </div>
      <div className="flex min-h-0 flex-1">
        <div className="flex w-[40px] shrink-0 flex-col items-center bg-[#333333] pt-[14px]">
          <svg width="20" height="30">
            <path d="M5 1 H14 L19 6 V25 H5 Z" fill="#8f8f8f" stroke="#aaa" />
            <path d="M1 5 H10 L15 10 V29 H1 Z" fill="#9c9c9c" stroke="#bbb" />
            <path d="M4 14 H12 M4 17 H12 M4 20 H12 M4 23 H12" stroke="#666" />
          </svg>
          <svg width="24" height="26" className="mt-auto">
            <path d="M1 1 H15 V11 H8 L5 15 V11 H1 Z" fill="#b8901e" stroke="#7a5e10" />
            <path d="M8 6 H23 V17 H16 L13 22 L12 17 H8 Z" fill="#e2bd3a" stroke="#8a6c18" />
            <path d="M11 10 H20 M11 13 H20" stroke="#6e5510" />
          </svg>
          <svg width="20" height="28" className="mb-[10px] mt-[19px]">
            <path d="M5 20 L14 5 C16 1 20 3 18 7 L8 23 C5 27 1 25 3 20 L11 8" fill="none" stroke="#bdbdbd" strokeWidth="2" />
          </svg>
        </div>
        <div className="w-[6px] shrink-0 border-r border-[#4a4a4a] bg-[#222]" />
        <div className="min-w-0 flex-1 overflow-hidden bg-white pl-[185px] pt-[3px]">
          <Ln>There are various secondary nucleation mechanisms such as attrition, surface breeding, dendritic breeding, etc.  In this</Ln>
          <Ln>version of gCRYSTAL, we only consider attrition, which tends to be the dominant secondary nucleation mechanism in</Ln>
          <Ln>industrial crystallisation processes.</Ln>
          <Ln cls="mt-[15px]">A model by Evans et al. is used to describe secondary nucleation resulting from attrition:</Ln>
          <div className="mt-[4px] flex h-[95px] items-center">
            <div className="w-[1103px] shrink-0">
              <Formula items={f1} vb="2151 240 1103 95" w={1103} h={95} />
            </div>
            <Ln cls="mt-[20px]">[Eq. 3]</Ln>
          </div>
          <div className="mt-[12px] grid grid-cols-[106px_56px_876px_1fr]">
            {whereRows.map(([s, d, u], i) => (
              <React.Fragment key={i}>
                <W>{i === 0 ? "where" : ""}</W>
                <W cls="italic">{s}</W>
                <W>{d}</W>
                <W>{u}</W>
              </React.Fragment>
            ))}
          </div>
          <Ln cls="mt-[18.6px]">This rate expression contains three parameter that needs to be estimated from experimental data.  As the first of these</Ln>
          <Ln>parameters can be as high as 10<sup>20</sup>, the expression is rewritten as shown below.</Ln>
          <div className="mt-[20px] flex h-[75px] items-center">
            <div className="w-[1103px] shrink-0">
              <Formula items={f2} vb="2151 730 1103 75" w={1103} h={75} />
            </div>
            <Ln cls="mt-[4px]">[Eq. 4]</Ln>
          </div>
          <div className="mt-[16px] grid grid-cols-[106px_59px_873px_1fr]">
            <W>where</W>
            <W>lnk<sub>n</sub></W>
            <W>natural logarithm of the proportional factor, i.e. ln(k<sub>n</sub>)</W>
            <W>[ln(#/m3.s)]</W>
          </div>
        </div>
        <div className="w-[4px] shrink-0 bg-[#333]" />
        <div className="flex w-[17px] shrink-0 flex-col items-center bg-[#f3f3f3] py-[6px]">
          <svg width="7" height="4"><path d="M0 4 H7 L3.5 0 Z" fill="#333" /></svg>
          <div className="mt-[555px] flex h-[17px] w-[14px] flex-col items-center justify-center gap-px rounded-[2px] border border-[#aaa] bg-white">
            <i className="h-px w-[6px] bg-[#777]" />
            <i className="h-px w-[6px] bg-[#777]" />
            <i className="h-px w-[6px] bg-[#777]" />
          </div>
          <svg width="7" height="4" className="mt-auto"><path d="M0 0 H7 L3.5 4 Z" fill="#333" /></svg>
        </div>
      </div>
    </div>
  );
}

export default function App() {
  const menu: [string, string][] = [
    ["File", "w-[27px]"], ["Edit", "w-[29px]"], ["View", "w-[33px]"], ["Entity", "w-[39px]"],
    ["Activities", "w-[57px]"], ["Tools", "w-[37px]"], ["Window", "w-[53px]"], ["Help", "w-[32px]"],
  ];
  return (
    <div className="relative flex h-[1080px] w-[3520px] overflow-hidden bg-black font-['Liberation_Sans',sans-serif] text-[11px] tracking-[-0.2px] text-[#1b1b1b]">
      <Defs />
      {/* gPROMS window */}
      <div className="flex h-[1080px] w-[1920px] shrink-0 flex-col">
        <div className="flex h-[22px] shrink-0 items-center border-b border-[#9fc2d6] bg-[linear-gradient(90deg,#23627f,#5f8ca6_8%,#43799a_12%,#2a6b8c_35%,#2d7094_70%,#2f7499)]">
          <div className="ml-[1px] flex h-[16px] w-[15px] items-center justify-center bg-[#f58a10] text-[16px] font-bold leading-none text-[#111]">g</div>
          <span className="ml-[5px] text-[12px] tracking-normal text-black">gPROMS ModelBuilder 3.6.0 (alpha 1)</span>
          <div className="ml-auto mr-[2px] flex h-[18px] self-start rounded-b-[3px] border-x border-b border-[#6da2bf]">
            <div className="flex w-[28px] items-center justify-center"><div className="h-[5px] w-[11px] border border-[#333] bg-white" /></div>
            <div className="flex w-[26px] items-center justify-center border-x border-[#6da2bf]"><div className="h-[9px] w-[12px] border border-[#333] bg-white/40" /></div>
            <div className="flex w-[34px] items-center justify-center bg-[linear-gradient(180deg,#dc7a6a,#b8412e)] text-[13px] font-bold leading-none text-white">x</div>
          </div>
        </div>
        <div className="flex h-5 shrink-0 items-center border-b-2 border-[#a5a5a5] bg-[linear-gradient(180deg,#eef0f8,#e2e6f3)] pl-[4px] text-[12px] tracking-normal text-[#222]">
          {menu.map(([t, c]) => (
            <span key={t} className={c}>{t}</span>
          ))}
        </div>
        <div className="flex h-[27px] shrink-0 items-center border-b-2 border-black bg-[#f4f4f4]">
          {leftTools.map(([n, a]) => (
            <Tb key={n} n={n} after={a} />
          ))}
          <svg width="17" height="6" className="shrink-0"><path d="M3 0 H12 L7.5 6 Z" fill="#111" /></svg>
          <Tb n="info" after={0} />
        </div>
        <div className="flex min-h-0 flex-1 bg-[#efefef]">
          {/* projects */}
          <div className="flex w-[405px] shrink-0 flex-col pl-[2px]">
            <div className="flex h-[19px] shrink-0 items-center pl-[3px] pr-[1px]">
              <div className="h-[6px] flex-1 border-y-2 border-[#999]" />
              <div className="ml-[4px] flex h-[12px] w-[12px] items-center justify-center border border-[#555] bg-[#dde] text-[10px] font-bold leading-none">×</div>
            </div>
            <div className="flex h-[22px] shrink-0 items-center pl-[3px]">
              <svg width="17" height="17"><rect x="0.5" y="0.5" width="15" height="15" fill="#eef" stroke="#777" /><path d="M1 1 L16 16" stroke="#1f3f8f" strokeWidth="2" /></svg>
              <div className="ml-[4px] flex h-[21px] w-[23px] items-center justify-center rounded-[3px] border border-[#777] bg-[#ddd]">
                <svg width="16" height="14"><path d="M1 8 L6 5 V11 Z" fill="#2a7f9a" /><path d="M15 5 L9 2 V8 Z" fill="#2a7f9a" /><path d="M4 11 L12 3" stroke="#666" /></svg>
              </div>
              <svg width="13" height="13" className="ml-[6px]"><rect x="0.5" y="0.5" width="12" height="12" rx="2" fill="#eef2f8" stroke="#8fa0b8" /><path d="M3 6.5 H10" stroke="#34507a" /></svg>
            </div>
            {/* tree box */}
            <div className="relative h-[883px] shrink-0 overflow-hidden border-2 border-[#8c8c96] bg-white">
              <div className="h-[879px] overflow-hidden">
                <Tree />
              </div>
              <div className="absolute bottom-0 right-0 top-0 flex w-[16px] flex-col items-center bg-[#f7f7f7] py-[8px]">
                <svg width="7" height="4"><path d="M0 4 H7 L3.5 0 Z" fill="#555" /></svg>
                <div className="mt-[292px] flex h-[323px] w-[14px] flex-col items-center justify-center gap-px rounded-[2px] border border-[#bbb] bg-[linear-gradient(90deg,#f2f2f2,#cfcfcf)]">
                  <i className="h-px w-[7px] bg-[#777]" />
                  <i className="h-px w-[7px] bg-[#777]" />
                  <i className="h-px w-[7px] bg-[#777]" />
                </div>
                <svg width="7" height="4" className="mt-auto"><path d="M0 0 H7 L3.5 4 Z" fill="#555" /></svg>
              </div>
            </div>
            <div className="flex text-[12px] tracking-normal">
              <div className="-ml-[2px] flex h-[24px] w-[53px] items-center justify-center border-b border-r border-[#999] bg-white">Projects</div>
              <div className="mt-[4px] flex h-[18px] w-[41px] items-center justify-center border border-[#999] bg-[#e4e4e4]">Palette</div>
            </div>
          </div>
          {/* editor */}
          <div className="ml-[8px] flex min-w-0 flex-1 flex-col border-l-2 border-black">
            <div className="flex h-[24px] shrink-0 items-center bg-[linear-gradient(180deg,#a9c5df,#d4e3f1)] pl-[5px] pr-[4px]">
              <Ic t="flask" />
              <span className="ml-[3px] text-[11px] tracking-[-0.1px] text-[#111]">PERFORMED EXPERIMENT lab_exp_high_seed_mass (API)</span>
              <div className="ml-auto flex gap-[2px]">
                <WinBtn cls="bg-[#c4d8ea]"><div className="h-[4px] w-[11px] border border-[#333] bg-white" /></WinBtn>
                <WinBtn cls="bg-[#c4d8ea]"><div className="h-[10px] w-[10px] border border-[#333] bg-white/70" /></WinBtn>
                <WinBtn cls="bg-[#c0574a] text-[14px] font-bold leading-none text-white"><span>X</span></WinBtn>
              </div>
            </div>
            <div className="flex min-h-0 flex-1 bg-[#b9d1e9] pl-[6px]">
              <div className="flex min-w-0 flex-1 flex-col">
                <div className="flex h-[901px] min-h-0 flex-col border-l border-r border-t-2 border-[#f6f8fb] border-r-[#999] bg-[#efefef] pl-[11px] pr-[10px] pt-[9px]">
                  <div className="h-[842px] shrink-0 border border-[#8a8a8a] bg-[#efefef]">
                    <Table />
                  </div>
                  <div className="mt-[7px] flex h-[20px] shrink-0 justify-center gap-[7px] text-[11px] tracking-normal">
                    <div className="flex w-[84px] items-center justify-center rounded-[2px] border border-[#c4c4c4] bg-[#f4f4f4] text-[#888]">Delete row</div>
                    <div className="flex w-[97px] items-center justify-center rounded-[2px] border border-[#c4c4c4] bg-[#f4f4f4] text-[#888]">Delete column</div>
                    <div className="flex w-[81px] items-center justify-center rounded-[2px] border border-[#777] bg-[linear-gradient(180deg,#f6f6f6,#d4d4d4)] text-black">Transpose</div>
                  </div>
                  <div className="flex-1" />
                </div>
                <div className="flex h-[24px] shrink-0 whitespace-nowrap border-t border-[#888] bg-[#efefef] pl-[1px] text-[11.5px] tracking-normal">
                  <div className="flex h-[20px] w-[48px] items-center justify-center border border-t-0 border-[#999] bg-[#e6e6e6]">General</div>
                  <div className="ml-[1px] flex h-[20px] w-[48px] items-center justify-center border border-t-0 border-[#999] bg-[#e6e6e6]">Controls</div>
                  <div className="flex h-[22px] w-[86px] items-center justify-center border-b border-r border-[#999] bg-white">Measured data</div>
                  <div className="flex h-[20px] w-[98px] items-center justify-center border border-t-0 border-[#999] bg-[#e6e6e6]">gPROMS language</div>
                  <div className="flex h-[20px] w-[58px] items-center justify-center border border-t-0 border-[#999] bg-[#e6e6e6]">Properties</div>
                </div>
              </div>
              <div className="w-[12px] shrink-0 border-r-2 border-[#38a4d8] bg-[#efefef]" />
            </div>
            <div className="h-[2px] shrink-0 bg-[#38a4d8]" />
          </div>
          <div className="w-[2px] shrink-0 bg-black" />
        </div>
        {/* status */}
        <div className="flex h-[23px] shrink-0 items-end bg-[#efefef]">
          <div className="h-[21px] flex-1 border border-[#9a9a9a] bg-[#f1f1f1]" />
          <div className="ml-[2px] mr-[2px] h-[21px] w-[84px] border border-[#c4c4c4] bg-[#f1f1f1]" />
        </div>
        <Taskbar />
      </div>
      <Pdf />
    </div>
  );
}
